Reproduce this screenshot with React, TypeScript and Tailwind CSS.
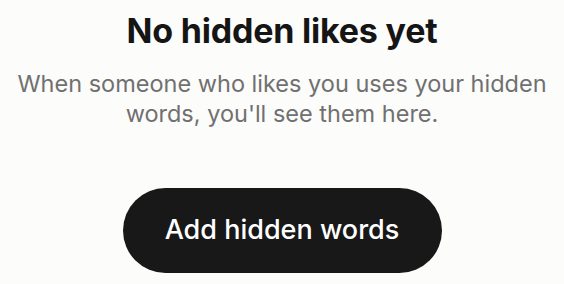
export default function App() {
  return (
    <div className="w-[564px] h-[284px] bg-[#fcfcfb] flex flex-col items-center overflow-hidden font-['Inter',sans-serif]">
      <h1 className="mt-[9px] text-[34px] leading-[44px] font-bold text-[#151515] tracking-[-0.2px]">
        No hidden likes yet
      </h1>
      <p className="mt-[16px] text-center text-[23.5px] leading-[30px] text-[#707070] whitespace-nowrap">
        When someone who likes you uses your hidden
        <br />
        words, you'll see them here.
      </p>
      <button className="mt-[59px] w-[319px] h-[85px] shrink-0 rounded-full bg-[#181818] text-white text-[27px] font-medium">
        Add hidden words
      </button>
    </div>
  );
}
